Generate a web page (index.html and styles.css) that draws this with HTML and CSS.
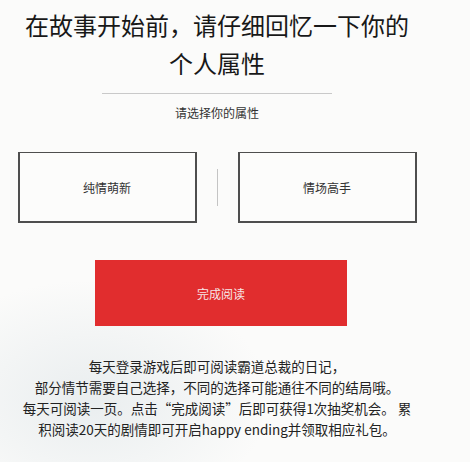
FILE: index.html
```html
<!DOCTYPE html>
<html lang="zh-CN">
<head>
<meta charset="utf-8">
<title>个人属性</title>
<link rel="stylesheet" href="styles.css">
</head>
<body>
<main class="page">
  <h1 class="title">在故事开始前，请仔细回忆一下你的<br>个人属性</h1>
  <hr class="rule">
  <p class="hint">请选择你的属性</p>
  <div class="options">
    <button class="option" type="button">纯情萌新</button>
    <span class="split"></span>
    <button class="option" type="button">情场高手</button>
  </div>
  <button class="finish" type="button">完成阅读</button>
  <p class="notes">每天登录游戏后即可阅读霸道总裁的日记，<br>部分情节需要自己选择，不同的选择可能通往不同的结局哦。<br>每天可阅读一页。点击“完成阅读”后即可获得1次抽奖机会。 累<br>积阅读20天的剧情即可开启happy ending并领取相应礼包。</p>
</main>
</body>
</html>
```

FILE: styles.css
```css
html, body {
  margin: 0;
  padding: 0;
}

body {
  width: 470px;
  height: 462px;
  overflow: hidden;
  background:
    radial-gradient(ellipse 180px 120px at 90px 400px, rgba(200, 212, 218, 0.35), rgba(200, 212, 218, 0) 100%),
    #fbfbfa;
  font-family: "Noto Sans CJK SC", "Noto Sans", sans-serif;
  color: #1c1c1c;
}

.page {
  width: 434px;
  display: flex;
  flex-direction: column;
  align-items: center;
}

.title {
  margin: 0;
  padding-top: 6px;
  font-size: 24px;
  font-weight: 400;
  line-height: 38px;
  text-align: center;
  color: #181818;
}

.rule {
  width: 230px;
  margin: 11px 0 0;
  border: 0;
  border-top: 1px solid #c9c9c9;
}

.hint {
  margin: 11px 0 0;
  font-size: 12px;
  line-height: 16px;
  color: #333;
}

.options {
  margin-top: 31px;
  display: flex;
  align-items: center;
  gap: 20px;
}

.option {
  width: 179px;
  height: 71px;
  box-sizing: border-box;
  border: 2px solid #4e4e4e;
  border-top-width: 1.5px;
  background: #fcfcfb;
  font-family: inherit;
  font-size: 12px;
  color: #333;
  padding: 0;
}

.split {
  width: 1px;
  height: 37px;
  background: #c4c4c4;
}

.finish {
  margin: 37px 0 0 8px;
  width: 252px;
  height: 66px;
  border: 0;
  background: #e12d2e;
  color: #f7e6e6;
  font-family: inherit;
  font-size: 12px;
  padding: 0;
}

.notes {
  margin: 30px 0 0;
  font-size: 13.5px;
  line-height: 21px;
  text-align: center;
  color: #222;
}
```
